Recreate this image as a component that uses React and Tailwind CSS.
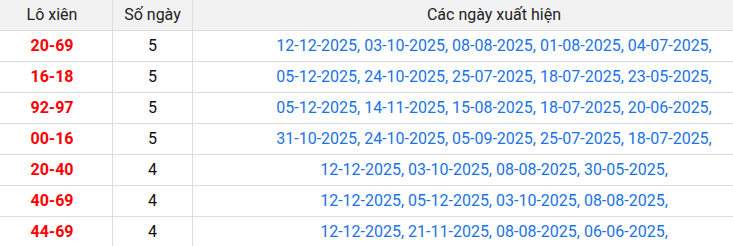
import React from "react";

const rows = [
  { pair: "20-69", days: 5, dates: "12-12-2025, 03-10-2025, 08-08-2025, 01-08-2025, 04-07-2025," },
  { pair: "16-18", days: 5, dates: "05-12-2025, 24-10-2025, 25-07-2025, 18-07-2025, 23-05-2025," },
  { pair: "92-97", days: 5, dates: "05-12-2025, 14-11-2025, 15-08-2025, 18-07-2025, 20-06-2025," },
  { pair: "00-16", days: 5, dates: "31-10-2025, 24-10-2025, 05-09-2025, 25-07-2025, 18-07-2025," },
  { pair: "20-40", days: 4, dates: "12-12-2025, 03-10-2025, 08-08-2025, 30-05-2025," },
  { pair: "40-69", days: 4, dates: "12-12-2025, 05-12-2025, 03-10-2025, 08-08-2025," },
  { pair: "44-69", days: 4, dates: "12-12-2025, 21-11-2025, 08-08-2025, 06-06-2025," },
];

const App = () => {
  return (
    <div className="w-[733px] h-[246px] overflow-hidden bg-white font-['Roboto',sans-serif] text-[16px]">
      {/* Header */}
      <div className="grid grid-cols-[113px_80px_1fr] h-[31px] bg-[#f2f2f2] border-b border-[#dddddd] text-[#222]">
        <div className="flex items-center justify-center pr-2 border-r border-[#dddddd]">Lô xiên</div>
        <div className="flex items-center justify-center border-r border-[#dddddd]">Số ngày</div>
        <div className="flex items-center justify-center pl-[62px]">Các ngày xuất hiện</div>
      </div>

      {/* Rows */}
      {rows.map((r) => (
        <div
          key={r.pair}
          className="grid grid-cols-[113px_80px_1fr] h-[31px] border-b border-[#dddddd]"
        >
          <div className="flex items-center justify-center pr-2 border-r border-[#dddddd] font-bold text-[#ff0000]">
            {r.pair}
          </div>
          <div className="flex items-center justify-center border-r border-[#dddddd] text-[#111]">
            {r.days}
          </div>
          <div className="flex items-center justify-center pl-[62px] text-[#1a73e8] whitespace-nowrap">
            {r.dates}
          </div>
        </div>
      ))}
    </div>
  );
};

export default App;
